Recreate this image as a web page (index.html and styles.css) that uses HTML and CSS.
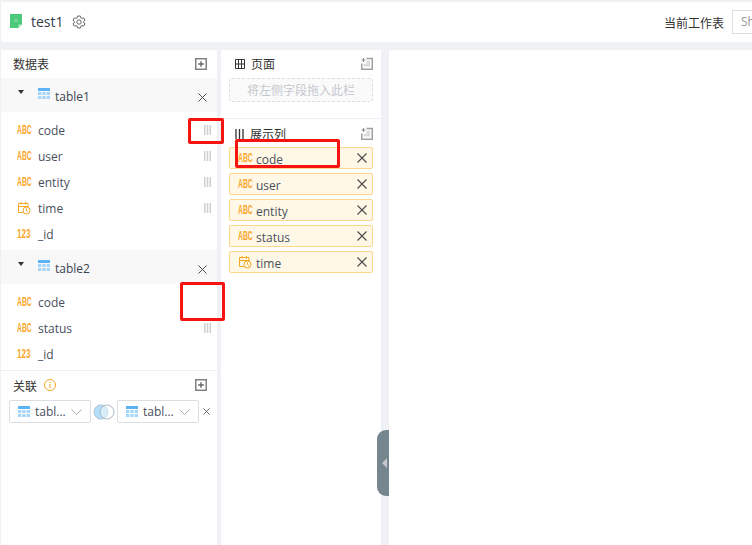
FILE: index.html
```html
<!DOCTYPE html>
<html lang="zh">
<head>
<meta charset="utf-8">
<title>test1</title>
<link rel="stylesheet" href="styles.css">
</head>
<body>
<svg class="defs" width="0" height="0" aria-hidden="true">
  <defs>
    <symbol id="grid" viewBox="0 0 12 11">
      <rect width="12" height="3" fill="#5cb3f5"/>
      <path d="M0 4h3.3v3H0zM4.3 4h3.3v3H4.300zM8.600 4H12v3H8.600zM0 8h3.300v3H0zM4.300 8h3.300v3H4.300zM8.600 8H12v3H8.600z" fill="#a5d5fa"/>
    </symbol>
    <symbol id="clock" viewBox="0 0 14 14">
      <path d="M6 11.500H1.500V2.500h9.500v3.500M1.500 5.500H11M4 1v2.500M8.500 1v2.500" fill="none" stroke="#f5a623"/>
      <circle cx="9.500" cy="9.500" r="3.500" fill="none" stroke="#f5a623"/>
      <path d="M9.500 7.500v2l1.500 1" fill="none" stroke="#f5a623"/>
    </symbol>
    <symbol id="x" viewBox="0 0 10 10">
      <path d="M.5.500l9 9M9.500.500l-9 9" fill="none" stroke="#4a4a4a" stroke-width="1.100"/>
    </symbol>
    <symbol id="addbox" viewBox="0 0 12 12">
      <rect x=".75" y=".75" width="10.500" height="10.500" fill="none" stroke="#808080" stroke-width="1.500"/>
      <path d="M6 3.200v5.600M3.200 6h5.600" stroke="#666" stroke-width="1.400"/>
    </symbol>
    <symbol id="addcorner" viewBox="0 0 12 13">
      <path d="M5.500 3.500H9v6H2.500V7H5.500z" fill="#dcdcdc"/>
      <path d="M5.500 1.500h5.750v10.750H.75V6.500" fill="none" stroke="#a0a0a0" stroke-width="1.500"/>
      <path d="M2.500 1v4M.500 3h4" stroke="#888"/>
    </symbol>
    <symbol id="drag" viewBox="0 0 7 10">
      <path d="M.75 0v10M3.500 0v10M6.250 0v10" stroke="#cfcfcf" stroke-width="1.500"/>
    </symbol>
  </defs>
</svg>

<header class="topbar">
  <svg class="doc" viewBox="0 0 12 14" width="12" height="14"><path d="M0 0h12v10.500L8.500 14H0z" fill="#4cc97a"/><path d="M12 10.500L8.500 14v-3.500z" fill="#b9ebc9"/><path d="M4.500 5l3 3M7.500 5l-3 3" stroke="#a9e8bf" stroke-width=".8"/></svg>
  <span class="doc-name">test1</span>
  <svg class="gear" viewBox="0 0 14 14" width="14" height="14"><path d="M5.700 1h2.600l.4 1.700 1.300.7 1.700-.5 1.300 2.200-1.300 1.200v1.400l1.300 1.200-1.300 2.200-1.700-.5-1.300.7-.4 1.700H5.700l-.4-1.700-1.300-.7-1.700.5L1 8.900l1.300-1.200V6.300L1 5.100l1.300-2.200 1.700.5 1.300-.7z" fill="none" stroke="#666" stroke-width="1"/><circle cx="7" cy="7" r="2.200" fill="none" stroke="#666"/></svg>
  <span class="sheet-label">当前工作表</span>
  <span class="sheet-select">Sheet1</span>
</header>

<main class="workspace">
  <aside class="panel tables">
    <div class="panel-title"><span>数据表</span><svg class="act"><use href="#addbox"/></svg></div>

    <div class="table-head">
      <span class="caret"></span>
      <svg class="grid"><use href="#grid"/></svg>
      <span class="table-name">table1</span>
      <svg class="close"><use href="#x"/></svg>
    </div>
    <ul class="fields">
      <li class="field"><span class="abc">ABC</span><span>code</span><svg class="drag"><use href="#drag"/></svg></li>
      <li class="field"><span class="abc">ABC</span><span>user</span><svg class="drag"><use href="#drag"/></svg></li>
      <li class="field"><span class="abc">ABC</span><span>entity</span><svg class="drag"><use href="#drag"/></svg></li>
      <li class="field"><svg class="clock"><use href="#clock"/></svg><span>time</span><svg class="drag"><use href="#drag"/></svg></li>
      <li class="field"><span class="abc num">123</span><span>_id</span></li>
    </ul>

    <div class="table-head">
      <span class="caret"></span>
      <svg class="grid"><use href="#grid"/></svg>
      <span class="table-name">table2</span>
      <svg class="close"><use href="#x"/></svg>
    </div>
    <ul class="fields second">
      <li class="field"><span class="abc">ABC</span><span>code</span></li>
      <li class="field"><span class="abc">ABC</span><span>status</span><svg class="drag"><use href="#drag"/></svg></li>
      <li class="field"><span class="abc num">123</span><span>_id</span></li>
    </ul>

    <section class="relations">
      <div class="rel-title">
        <span>关联</span>
        <svg class="info" viewBox="0 0 12 12" width="12" height="12"><circle cx="6" cy="6" r="5.500" fill="none" stroke="#f5a623"/><path d="M6 5v4M6 3v1" stroke="#f5a623"/></svg>
        <svg class="act push"><use href="#addbox"/></svg>
      </div>
      <div class="rel-row">
        <div class="rel-select"><svg class="grid"><use href="#grid"/></svg><span>tabl...</span><svg class="chev" viewBox="0 0 11 6" width="11" height="6"><path d="M.5.500l5 5 5-5" fill="none" stroke="#aaa"/></svg></div>
        <svg class="venn" viewBox="0 0 22 16" width="22" height="16"><circle cx="8" cy="8" r="7" fill="#b5defa" stroke="#a8c4d4"/><circle cx="14" cy="8" r="7" fill="#fff" fill-opacity=".45" stroke="#a8b8c4"/></svg>
        <div class="rel-select"><svg class="grid"><use href="#grid"/></svg><span>tabl...</span><svg class="chev" viewBox="0 0 11 6" width="11" height="6"><path d="M.5.500l5 5 5-5" fill="none" stroke="#aaa"/></svg></div>
        <svg class="rel-x"><use href="#x"/></svg>
      </div>
    </section>
  </aside>

  <aside class="panel shelves">
    <section class="shelf page-shelf">
      <div class="shelf-title">
        <svg class="shelf-ico" viewBox="0 0 10 10" width="10" height="10"><path d="M.5.500h9v9h-9zM3.500.500v9M6.500.500v9M.5 5h9" fill="none" stroke="#333"/></svg>
        <span>页面</span>
        <svg class="corner"><use href="#addcorner"/></svg>
      </div>
      <div class="dropzone">将左侧字段拖入此栏</div>
    </section>
    <section class="shelf">
      <div class="shelf-title">
        <svg class="shelf-ico" viewBox="0 0 9 10" width="9" height="10"><path d="M1 0v10M4.500 0v10M8 0v10" stroke="#333" stroke-width="1.300"/></svg>
        <span>展示列</span>
        <svg class="corner"><use href="#addcorner"/></svg>
      </div>
      <ul class="chips">
        <li class="chip"><span class="abc">ABC</span><span class="chip-text">code</span><svg class="chip-x"><use href="#x"/></svg></li>
        <li class="chip"><span class="abc">ABC</span><span class="chip-text">user</span><svg class="chip-x"><use href="#x"/></svg></li>
        <li class="chip"><span class="abc">ABC</span><span class="chip-text">entity</span><svg class="chip-x"><use href="#x"/></svg></li>
        <li class="chip"><span class="abc">ABC</span><span class="chip-text">status</span><svg class="chip-x"><use href="#x"/></svg></li>
        <li class="chip"><svg class="clock"><use href="#clock"/></svg><span class="chip-text">time</span><svg class="chip-x"><use href="#x"/></svg></li>
      </ul>
    </section>
  </aside>

  <section class="canvas"></section>
  <div class="handle"><span class="handle-arrow"></span></div>
</main>

<div class="mark mark-drag1"></div>
<div class="mark mark-drag2"></div>
<div class="mark mark-chip"></div>
</body>
</html>
```

FILE: styles.css
```css
* { box-sizing: border-box; }

html, body {
  margin: 0;
  height: 100%;
  overflow: hidden;
}

body {
  position: relative;
  background: #f0f1f5;
  padding-top: 2px;
  font-family: "Noto Sans CJK SC", "Noto Sans", sans-serif;
  font-size: 12px;
  color: #495060;
}

ul { list-style: none; margin: 0; padding: 0; }
.defs { position: absolute; }
svg { display: block; flex: none; }

.topbar {
  height: 40px;
  margin-left: 1px;
  background: #fff;
  display: flex;
  align-items: center;
  padding-left: 9px;
  overflow: hidden;
}
.doc { margin-top: -2px; }
.doc-name {
  margin-left: 9px;
  font-family: "Open Sans", sans-serif;
  font-size: 14px;
  color: #333b4a;
  margin-top: -2px;
}
.gear { margin-left: 8px; }
.sheet-label {
  margin-left: auto;
  margin-right: 8px;
  color: #333;
  font-size: 12px;
}
.sheet-select {
  flex: 0 0 20px;
  height: 24px;
  border: 1px solid #dcdee2;
  border-right: 0;
  padding-left: 8px;
  line-height: 22px;
  white-space: nowrap;
  overflow: hidden;
  color: #999;
  font-family: "Open Sans", sans-serif;
}

.workspace {
  position: relative;
  margin-top: 8px;
  height: 495px;
  display: grid;
  grid-template-columns: 216px 160px 1fr;
  column-gap: 4px;
  padding-left: 1px;
}
.panel { background: #fff; min-width: 0; }
.tables { display: flex; flex-direction: column; }
.canvas { background: #fff; margin-left: 4px; }

.panel-title {
  height: 28px;
  display: flex;
  align-items: center;
  justify-content: space-between;
  padding: 0 10px 1px 12px;
  color: #333;
  font-size: 12px;
}
.act { width: 12px; height: 12px; }
.push { margin-left: auto; }

.table-head {
  height: 34px;
  background: #f8f8f8;
  display: flex;
  align-items: center;
  padding: 0 9px 0 17px;
}
.caret {
  width: 0;
  height: 0;
  border-left: 3.500px solid transparent;
  border-right: 3.500px solid transparent;
  border-top: 4px solid #333;
  margin-top: -7px;
}
.table-head .grid { margin-left: 14px; margin-top: -4px; }
.grid { width: 12px; height: 11px; }
.table-name {
  margin-left: 5px;
  color: #3b4350;
  font-family: "Open Sans", sans-serif;
  font-size: 12px;
  margin-top: 2px;
}
.close { width: 9px; height: 9px; margin: 4px 1px 0 auto; }

.fields { padding: 5px 0 3px; }
.fields.second { border-bottom: 1px solid #eceef2; }
.field {
  height: 26px;
  display: flex;
  align-items: center;
  padding: 0 6px 0 16px;
  gap: 7px;
  font-family: "Open Sans", sans-serif;
  font-size: 12px;
}
.abc {
  flex: 0 0 14px;
  width: 14px;
  font-family: "Liberation Sans", sans-serif;
  font-size: 13px;
  font-weight: 700;
  line-height: 14px;
  white-space: nowrap;
  color: #fba62c;
  transform: scaleX(.52);
  transform-origin: left center;
}
.num { transform: scaleX(.62); }
.clock { width: 14px; height: 14px; }
.drag { width: 7px; height: 10px; margin-left: auto; }

.relations { padding: 0 8px; flex: 1; }
.rel-title {
  height: 29px;
  display: flex;
  align-items: center;
  padding: 0 2px 1px 4px;
  color: #333;
}
.info { margin-left: 7px; }
.rel-row { display: flex; align-items: center; }
.rel-select {
  width: 82px;
  height: 23px;
  border: 1px solid #dcdee2;
  border-radius: 2px;
  display: flex;
  align-items: center;
  padding: 0 8px;
  font-family: "Open Sans", sans-serif;
  font-size: 12px;
  gap: 5px;
  white-space: nowrap;
}
.chev { margin-left: auto; margin-right: 4px; }
.venn { margin: 0 2px; }
.rel-x { width: 7px; height: 7px; margin-left: 4px; }

.shelf { padding: 0 8px; }
.page-shelf { height: 69px; border-bottom: 1px solid #eceef2; }
.shelf-title {
  height: 28px;
  display: flex;
  align-items: center;
  gap: 5px;
  padding: 0 0 1px 6px;
  color: #333;
  font-size: 12px;
}
.shelf-ico { margin-right: 1px; }
.corner { width: 12px; height: 13px; margin-left: auto; margin-top: -1px; }
.dropzone {
  height: 24px;
  border: 1px dashed #dcdee2;
  border-radius: 3px;
  background: #fafafa;
  color: #c5c8ce;
  text-align: center;
  line-height: 22px;
  font-size: 12px;
}

.chips { display: flex; flex-direction: column; gap: 4px; margin-top: -1px; }
.shelf:not(.page-shelf) .shelf-title { margin-top: 1px; }
.chip {
  height: 22px;
  background: #fff8e6;
  border: 1px solid #fcd78c;
  border-radius: 2px;
  display: flex;
  align-items: center;
  padding: 0 5px 0 8px;
  gap: 4px;
  font-family: "Open Sans", sans-serif;
  font-size: 12px;
}
.chip-text { margin-top: 2px; }
.chip-x { width: 10px; height: 10px; margin-left: auto; }

.handle {
  position: absolute;
  left: 377px;
  top: 380px;
  width: 12px;
  height: 66px;
  background: #76868f;
  border-radius: 9px 0 0 9px;
  display: flex;
  align-items: center;
  justify-content: flex-end;
  padding-right: 2px;
}
.handle-arrow {
  width: 0;
  height: 0;
  border-top: 5px solid transparent;
  border-bottom: 5px solid transparent;
  border-right: 5px solid #c4c8cc;
}

.mark {
  position: absolute;
  border: 3px solid #f5140f;
  border-radius: 2px;
}
.mark-drag1 { left: 188px; top: 118px; width: 36px; height: 26px; }
.mark-drag2 { left: 180px; top: 282px; width: 45px; height: 39px; }
.mark-chip { left: 235px; top: 139px; width: 105px; height: 29px; }
```
